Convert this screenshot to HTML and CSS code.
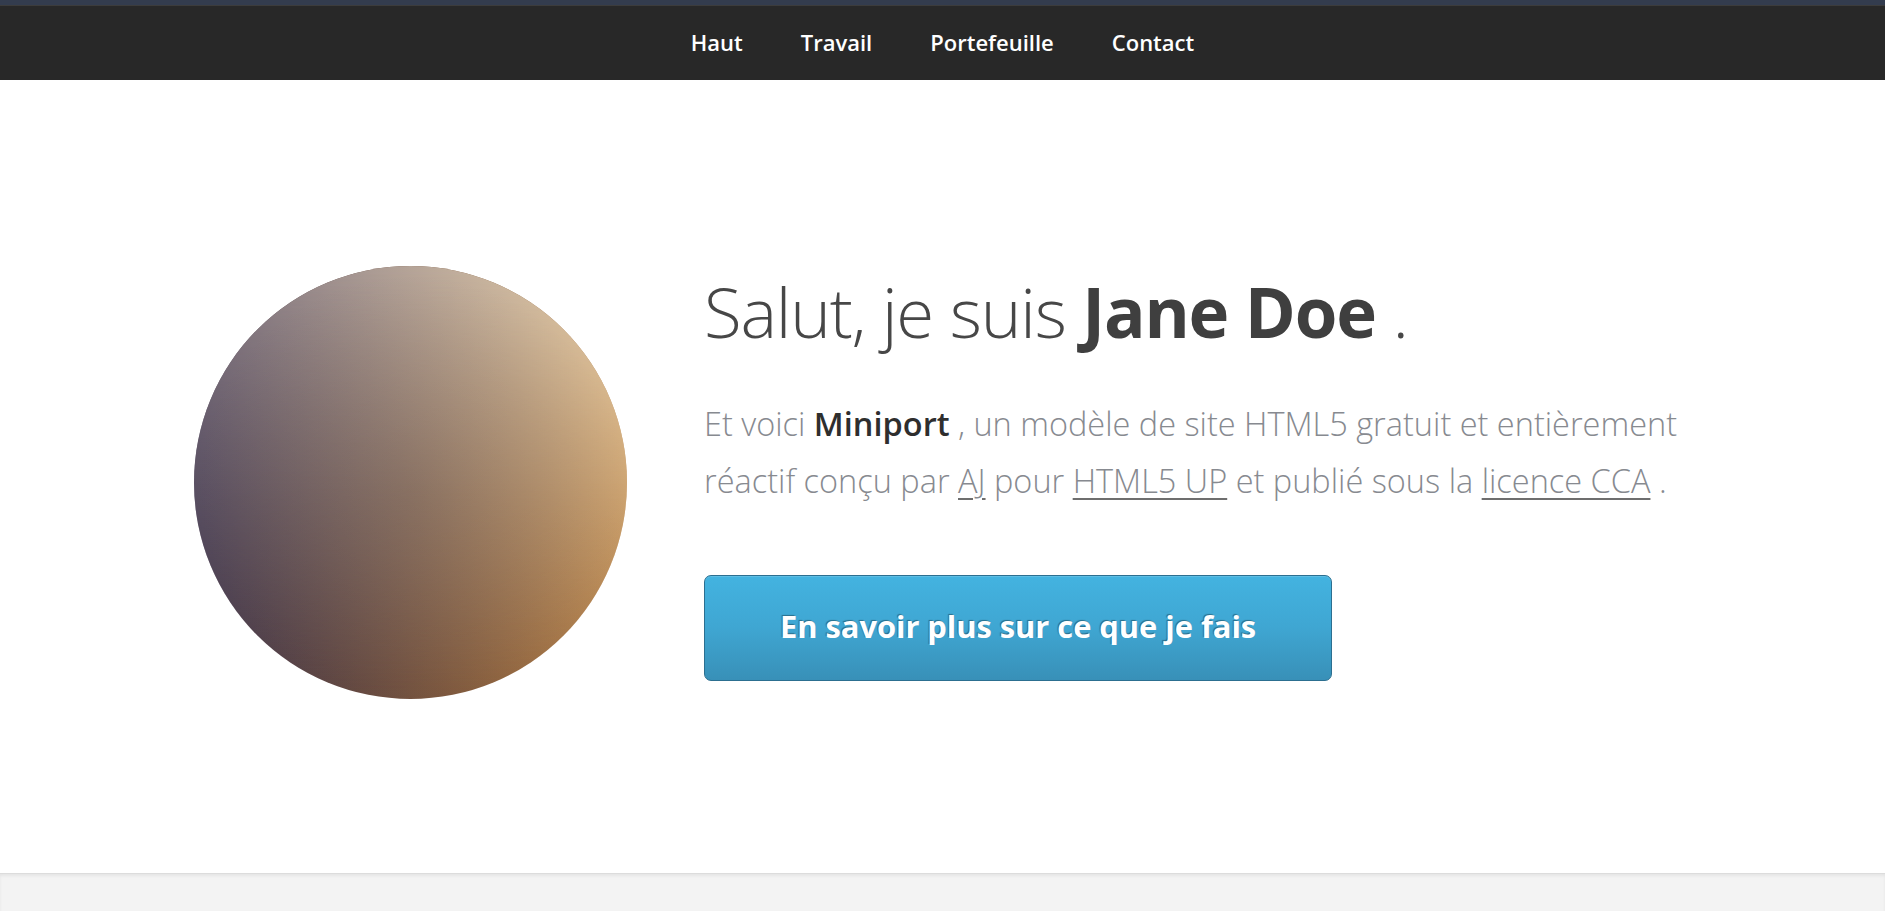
FILE: index.html
```html
<!DOCTYPE html>
<html lang="fr">
<head>
<meta charset="utf-8">
<title>Miniport</title>
<link rel="stylesheet" href="styles.css">
</head>
<body>
<div class="topstrip"></div>
<nav class="nav">
  <a href="#top">Haut</a>
  <a href="#work">Travail</a>
  <a href="#portfolio">Portefeuille</a>
  <a href="#contact">Contact</a>
</nav>
<section class="hero">
  <div class="avatar"></div>
  <div class="intro">
    <h1>Salut, je suis <strong>Jane Doe</strong> .</h1>
    <p>Et voici <strong>Miniport</strong> , un modèle de site HTML5 gratuit et entièrement réactif conçu par <a href="#">AJ</a> pour <a href="#">HTML5 UP</a> et publié sous la <a href="#">licence CCA</a> .</p>
    <a class="button" href="#work">En savoir plus sur ce que je fais</a>
  </div>
</section>
<div class="below"></div>
</body>
</html>
```

FILE: styles.css
```css
html, body {
  margin: 0;
  padding: 0;
}
body {
  font-family: "Open Sans", "Noto Sans", sans-serif;
  font-size: 20px;
  background: #f2f2f2;
  overflow: hidden;
  height: 911px;
}
.topstrip {
  height: 5px;
  background: #333c4e;
  border-bottom: 1px solid #3c3c3c;
}
.nav {
  height: 74px;
  background: #282828;
  display: flex;
  justify-content: center;
  align-items: center;
  gap: 58px;
}
.nav a {
  color: #fff;
  text-decoration: none;
  font-weight: 600;
  font-size: 22px;
  line-height: 22px;
  padding-bottom: 2px;
}
.hero {
  height: 793px;
  box-sizing: border-box;
  background: #fff;
  display: flex;
  align-items: flex-start;
  padding-left: 194px;
}
.avatar {
  position: relative;
  width: 433px;
  height: 433px;
  flex: none;
  margin-top: 186px;
  border-radius: 50%;
  overflow: hidden;
  background: linear-gradient(to right, #372d44 0%, #b0773a 100%);
}
.avatar::before {
  content: "";
  position: absolute;
  inset: 0;
  background: linear-gradient(to right, #7f7583 0%, #ecd4ae 100%);
  -webkit-mask-image: linear-gradient(to bottom, #000 0%, transparent 100%);
  mask-image: linear-gradient(to bottom, #000 0%, transparent 100%);
}
.avatar::after {
  content: "";
  position: absolute;
  inset: 0;
  background: radial-gradient(circle at 50% 52%, rgba(60,50,45,0.12) 0%, rgba(60,50,45,0.05) 45%, rgba(0,0,0,0) 70%);
}
.intro {
  margin-left: 77px;
  margin-top: 196px;
  width: 1010px;
}
.intro h1 {
  margin: 0;
  font-size: 69px;
  line-height: 70px;
  font-weight: 300;
  color: #474747;
  letter-spacing: -1.2px;
}
.intro h1 strong {
  font-weight: 700;
  color: #3f3f3f;
}
.intro p {
  margin: 50px 0 0;
  font-size: 32.5px;
  line-height: 56.5px;
  font-weight: 300;
  color: #878a90;
}
.intro p strong {
  font-weight: 600;
  color: #2e2e2e;
}
.intro p a {
  color: inherit;
  text-decoration: underline;
  text-decoration-color: #6e6e6e;
  text-decoration-thickness: 2px;
  text-underline-offset: 5px;
}
.button {
  display: inline-block;
  margin-top: 66px;
  padding: 35px 75px 39px;
  font-size: 30.8px;
  line-height: 30px;
  font-weight: 700;
  color: #fff;
  text-decoration: none;
  text-shadow: -1px -1px 1px rgba(0,0,0,0.35);
  background: linear-gradient(to bottom, #43b3e0 0%, #3fa6d2 50%, #3890b8 100%);
  border: 1px solid #2c6f90;
  border-radius: 7px;
  box-shadow: inset 0 1px 0 rgba(255,255,255,0.15);
}
.below {
  height: 38px;
  background: #f3f3f3;
  border-top: 1px solid #dcdcdc;
  box-shadow: inset 0 2px 3px rgba(0,0,0,0.06);
}
```
